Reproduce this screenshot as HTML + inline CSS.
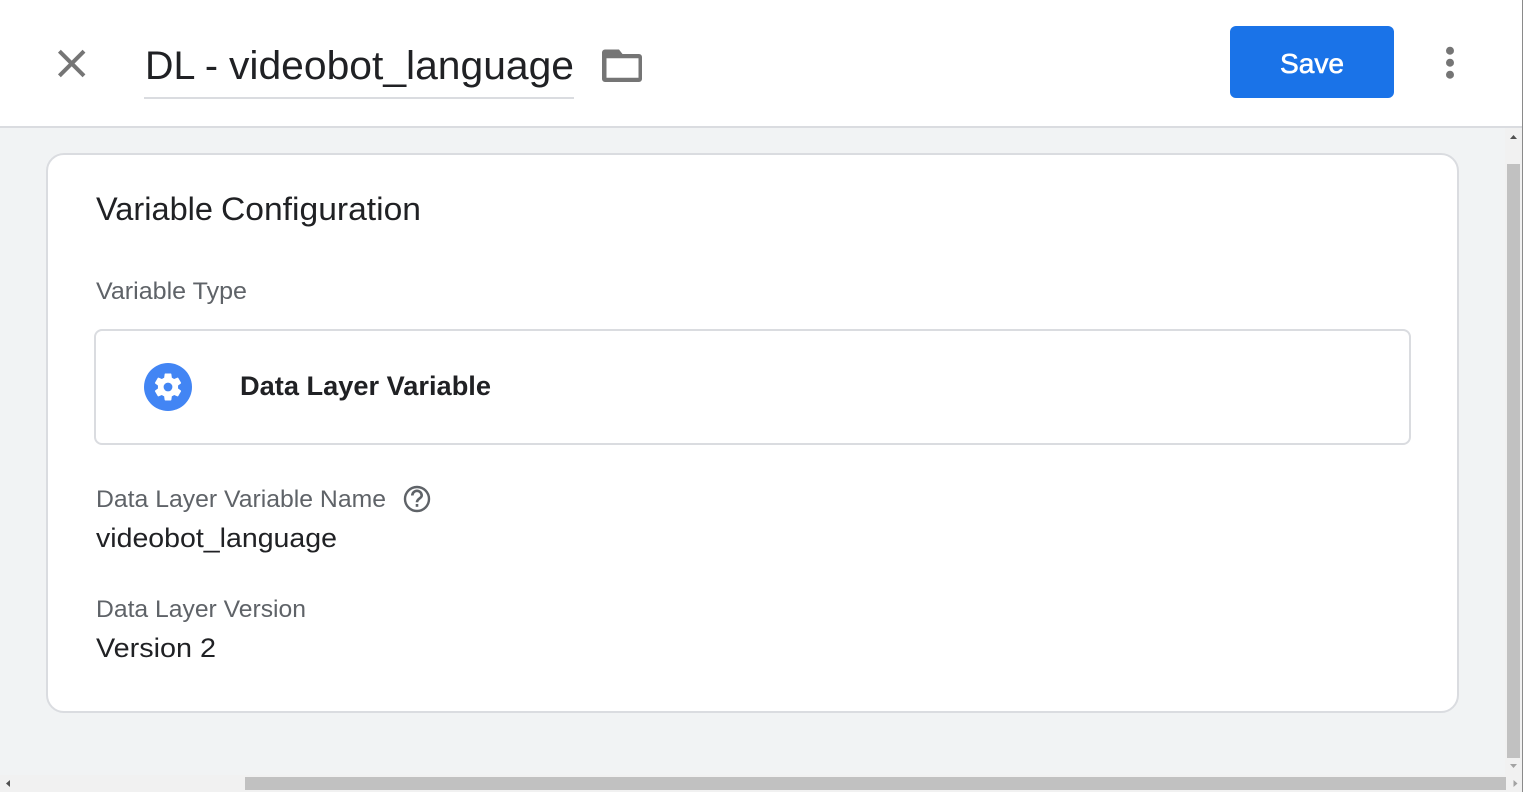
<!DOCTYPE html>
<html lang="en">
<head>
<meta charset="utf-8">
<title>DL - videobot_language</title>
<style>
html,body{margin:0;padding:0;width:1523px;height:792px;overflow:hidden;background:#f1f3f4}
.abs{position:absolute;box-sizing:border-box}
svg{position:absolute;left:0;top:0}
text{font-family:"Liberation Sans",sans-serif}
</style>
</head>
<body>
<div class="abs" style="left:0;top:0;width:1523px;height:128px;background:#fff;border-bottom:2px solid #dadce0"></div>
<div class="abs" style="left:144px;top:97px;width:430px;height:2px;background:#dadce0"></div>
<div class="abs" style="left:1230px;top:26px;width:164px;height:72px;background:#1a73e8;border-radius:6px"></div>
<div class="abs" style="left:46px;top:153px;width:1413px;height:560px;background:#fff;border:2px solid #dadce0;border-radius:18px"></div>
<div class="abs" style="left:94px;top:329px;width:1317px;height:116px;background:#fff;border:2px solid #dadce0;border-radius:8px"></div>

<!-- scrollbars -->
<div class="abs" style="left:1505px;top:128px;width:17px;height:664px;background:#f1f1f1"></div>
<div class="abs" style="left:0;top:775px;width:1522px;height:17px;background:#f1f1f1"></div>
<div class="abs" style="left:1507px;top:164px;width:13px;height:594px;background:#c1c1c1"></div>
<div class="abs" style="left:245px;top:777px;width:1261px;height:13px;background:#c1c1c1"></div>
<div class="abs" style="left:1522px;top:0;width:1px;height:792px;background:#8a8a8a"></div>

<svg width="1523" height="792" viewBox="0 0 1523 792" xmlns="http://www.w3.org/2000/svg">
  <!-- close -->
  <path d="M59.400 51.200L84 75.800M84 51.200L59.400 75.800" stroke="#757575" stroke-width="4" fill="none"/>
  <!-- title -->
  <text x="145" y="79" font-size="40" fill="#202124" textLength="73" lengthAdjust="spacingAndGlyphs">DL -</text>
  <text x="229" y="79" font-size="40" fill="#202124" textLength="345" lengthAdjust="spacingAndGlyphs">videobot_language</text>
  <!-- folder -->
  <path d="M605 49.500h14l3.500 4.500h16.500a3 3 0 0 1 3 3v22a3 3 0 0 1-3 3h-34a3 3 0 0 1-3-3V52.500a3 3 0 0 1 3-3zM606.500 58.300v19.400h32V58.300z" fill="#757575" fill-rule="evenodd"/>
  <!-- Save -->
  <text x="1280" y="73" font-size="28" font-weight="400" fill="#fff" stroke="#fff" stroke-width=".6" textLength="64" lengthAdjust="spacingAndGlyphs">Save</text>
  <!-- dots -->
  <circle cx="1450" cy="50.700" r="4" fill="#757575"/>
  <circle cx="1450" cy="62.700" r="4" fill="#757575"/>
  <circle cx="1450" cy="74.700" r="4" fill="#757575"/>
  <!-- scroll arrows -->
  <path d="M1510 139h7l-3.500-4z" fill="#505050"/>
  <path d="M1510 764h7l-3.500 4z" fill="#a3a3a3"/>
  <path d="M10 780v7l-4-3.500z" fill="#505050"/>
  <path d="M1513.500 780v7l4-3.500z" fill="#a3a3a3"/>
  <!-- headings -->
  <text x="96" y="220" font-size="32" fill="#202124" textLength="117" lengthAdjust="spacingAndGlyphs">Variable</text>
  <text x="221" y="220" font-size="32" fill="#202124" textLength="200" lengthAdjust="spacingAndGlyphs">Configuration</text>
  <text x="96" y="299" font-size="24" fill="#5f6368" textLength="151" lengthAdjust="spacingAndGlyphs">Variable Type</text>
  <!-- gear badge -->
  <circle cx="168" cy="387" r="24" fill="#4285f4"/>
  <g transform="translate(168 387) scale(1.4) translate(-12 -12)">
    <path fill="#fff" d="M19.140 12.940c.04-.3.06-.61.06-.94 0-.32-.02-.64-.07-.94l2.030-1.580c.18-.14.23-.41.12-.61l-1.920-3.320c-.12-.22-.37-.29-.59-.22l-2.390.96c-.5-.38-1.030-.7-1.620-.94l-.36-2.540c-.04-.24-.24-.41-.48-.41h-3.840c-.24 0-.43.17-.47.41l-.36 2.540c-.59.24-1.130.57-1.620.94l-2.390-.96c-.22-.08-.47 0-.59.22L2.740 8.870c-.12.21-.08.47.12.61l2.030 1.580c-.05.3-.09.63-.09.94s.02.64.07.94l-2.030 1.580c-.18.14-.23.41-.12.61l1.920 3.320c.12.22.37.29.59.22l2.390-.96c.5.38 1.030.7 1.620.94l.36 2.540c.05.24.24.41.48.41h3.840c.24 0 .44-.17.47-.41l.36-2.540c.59-.24 1.130-.56 1.620-.94l2.390.96c.22.08.47 0 .59-.22l1.920-3.320c.12-.22.07-.47-.12-.61l-2.010-1.580z"/>
  </g>
  <circle cx="168" cy="387" r="4.400" fill="#4285f4"/>
  <text x="240" y="395" font-size="27" font-weight="700" fill="#202124" textLength="251" lengthAdjust="spacingAndGlyphs">Data Layer Variable</text>
  <!-- name field -->
  <text x="96" y="507" font-size="24" fill="#5f6368" textLength="290" lengthAdjust="spacingAndGlyphs">Data Layer Variable Name</text>
  <circle cx="417" cy="499" r="12" fill="none" stroke="#5f6368" stroke-width="2.400"/>
  <path d="M412.300 495.500a4.700 4.700 0 0 1 9.400 0c0 3-4.700 3-4.700 6.800" fill="none" stroke="#5f6368" stroke-width="2.600"/>
  <rect x="415.700" y="504" width="2.600" height="2.800" fill="#5f6368"/>
  <text x="96" y="547" font-size="27" fill="#202124" textLength="241" lengthAdjust="spacingAndGlyphs">videobot_language</text>
  <!-- version field -->
  <text x="96" y="617" font-size="24" fill="#5f6368" textLength="210" lengthAdjust="spacingAndGlyphs">Data Layer Version</text>
  <text x="96" y="657" font-size="27" fill="#202124" textLength="120" lengthAdjust="spacingAndGlyphs">Version 2</text>
</svg>
</body>
</html>
